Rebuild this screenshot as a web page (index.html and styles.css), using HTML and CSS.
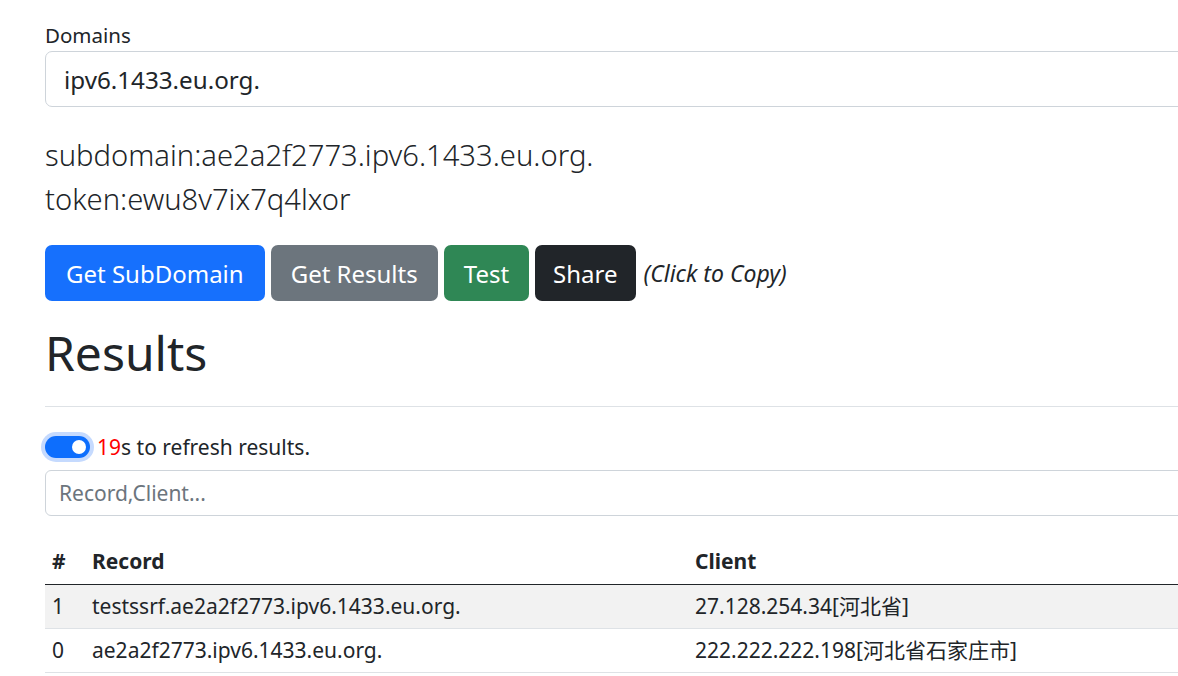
FILE: index.html
```html
<!DOCTYPE html>
<html lang="en">
<head>
<meta charset="utf-8">
<title>DNSLog</title>
<link rel="stylesheet" href="styles.css">
</head>
<body>
<main class="container">
  <label class="form-label" for="domain">Domains</label>
  <input class="form-control form-control-lg" id="domain" type="text" value="ipv6.1433.eu.org.">

  <div class="info">
    <p class="lead">subdomain:ae2a2f2773.ipv6.1433.eu.org.</p>
    <p class="lead">token:ewu8v7ix7q4lxor</p>
  </div>

  <div class="actions">
    <button class="btn btn-primary">Get SubDomain</button>
    <button class="btn btn-secondary">Get Results</button>
    <button class="btn btn-success">Test</button>
    <button class="btn btn-dark">Share</button>
    <em class="copy-hint">(Click to Copy)</em>
  </div>

  <h1 class="title">Results</h1>
  <hr class="divider">

  <div class="refresh">
    <span class="switch"><span class="knob"></span></span>
    <span class="refresh-text"><span class="count">19</span>s to refresh results.</span>
  </div>

  <input class="form-control search" type="text" placeholder="Record,Client...">

  <table class="table">
    <thead>
      <tr><th class="col-id">#</th><th class="col-record">Record</th><th>Client</th></tr>
    </thead>
    <tbody>
      <tr class="striped"><td>1</td><td>testssrf.ae2a2f2773.ipv6.1433.eu.org.</td><td>27.128.254.34[河北省]</td></tr>
      <tr><td>0</td><td>ae2a2f2773.ipv6.1433.eu.org.</td><td>222.222.222.198[河北省石家庄市]</td></tr>
    </tbody>
  </table>
</main>
</body>
</html>
```

FILE: styles.css
```css
html, body {
  margin: 0;
  padding: 0;
  overflow: hidden;
  background: #fff;
}

body {
  font-family: "Noto Sans", "Noto Sans CJK SC", sans-serif;
  font-size: 20px;
  line-height: 1.5;
  color: #212529;
}

.container {
  width: 1300px;
  padding: 20px 0 0 45px;
  box-sizing: border-box;
}

.form-label {
  display: block;
  font-size: 20.5px;
  line-height: 30px;
  margin-bottom: 1px;
}

.form-control {
  display: block;
  width: 100%;
  box-sizing: border-box;
  font-family: inherit;
  color: #212529;
  background: #fff;
  border: 1px solid #ced4da;
  border-radius: 6px;
  outline: none;
}

.form-control-lg {
  height: 56px;
  font-size: 24.2px;
  padding: 0 18px;
  border-radius: 7px;
}

.info {
  margin-top: 26px;
}

.lead {
  margin: 0;
  font-size: 29.2px;
  font-weight: 300;
  line-height: 44px;
  color: #212529;
}

.actions {
  display: flex;
  align-items: center;
  gap: 6px;
  margin-top: 24px;
}

.btn {
  height: 56px;
  padding: 0 19px;
  font-family: inherit;
  font-size: 24px;
  border: 1px solid transparent;
  border-radius: 7px;
  color: #fff;
  cursor: pointer;
}

.btn-primary { background: #1670fd; padding: 0 20px; }
.btn-secondary { background: #6c757d; }
.btn-success { background: #2f8755; }
.btn-dark { background: #212529; padding: 0 17px; }

.copy-hint {
  margin-left: 2px;
  font-size: 23px;
  font-style: italic;
}

.title {
  margin: 22px 0 0;
  font-size: 48px;
  font-weight: 400;
  line-height: 60px;
}

.divider {
  margin: 23px 0 0;
  border: 0;
  border-top: 1px solid #dee2e6;
}

.refresh {
  display: flex;
  align-items: center;
  gap: 7px;
  margin-top: 28px;
  height: 24px;
}

.switch {
  position: relative;
  width: 45px;
  height: 22px;
  border-radius: 11px;
  background: #0d6efd;
  box-shadow: 0 0 0 4px #c5dafe;
  box-sizing: border-box;
}

.knob {
  position: absolute;
  right: 4px;
  top: 4px;
  width: 14px;
  height: 14px;
  border-radius: 50%;
  background: #fff;
}

.refresh-text {
  font-size: 21px;
  line-height: 24px;
}

.count { color: #ff0000; }

.search {
  margin-top: 11px;
  height: 46px;
  font-size: 21px;
  padding: 0 13px;
}

.search::placeholder { color: #6c757d; }

.table {
  margin-top: 24px;
  width: 100%;
  border-collapse: collapse;
  font-size: 21px;
}

.table th,
.table td {
  text-align: left;
  padding: 0 7px;
  height: 43px;
  border-bottom: 1px solid #dee2e6;
}

.table th {
  height: 44px;
  font-weight: 700;
  border-bottom: 1px solid #212529;
}

.col-id { width: 26px; }
.col-record { width: 589px; }

.table tr.striped td { background: #f2f2f2; }
```
